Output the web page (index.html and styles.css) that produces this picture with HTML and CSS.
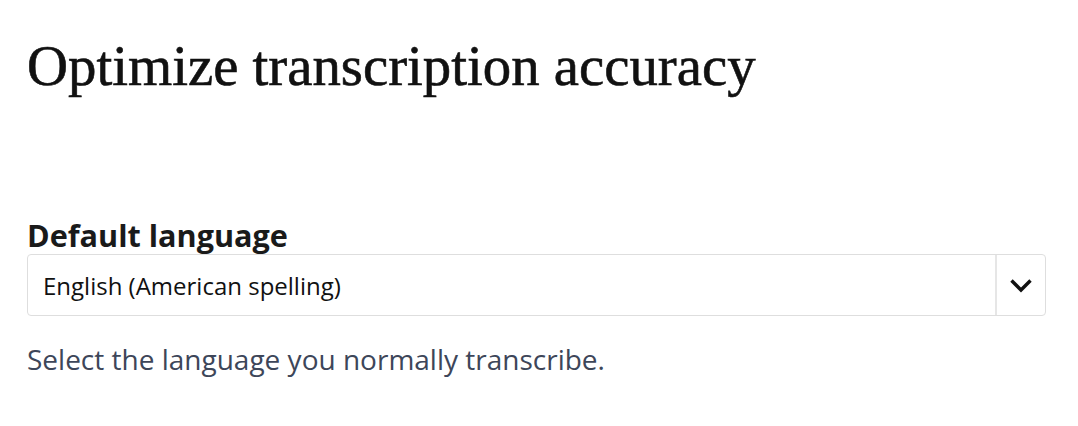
FILE: index.html
```html
<!DOCTYPE html>
<html lang="en">

<head>
    <meta charset="UTF-8">
    <title>Optimize transcription accuracy</title>
    <link rel="stylesheet" href="styles.css">
</head>

<body>
    <div class="page">
        <h1>Optimize transcription accuracy</h1>
        <div class="field">
            <label for="lang">Default language</label>
            <div class="select" id="lang">
                <span class="value">English (American spelling)</span>
                <span class="arrow">
                    <svg width="24" height="15" viewBox="0 0 24 15">
                        <path d="M2.5 2.5 L12 12 L21.5 2.5" fill="none" stroke="#111" stroke-width="3.4" />
                    </svg>
                </span>
            </div>
            <p class="help">Select the language you normally transcribe.</p>
        </div>
    </div>
</body>

</html>
```

FILE: styles.css
```css
body {
    margin: 0;
    background: #fff;
    font-family: "Open Sans", sans-serif;
}

.page {
    padding: 32px 27px;
    width: 1019px;
}

h1 {
    font-family: "Liberation Serif", serif;
    font-weight: 400;
    font-size: 56.8px;
    color: #111;
    margin: 0;
    line-height: 68px;
    -webkit-text-stroke: 0.6px #111;
}

.field {
    margin-top: 117px;
}

label {
    display: block;
    font-weight: 700;
    font-size: 30.6px;
    color: #1a1a1a;
    line-height: 36px;
}

.select {
    display: flex;
    height: 60px;
    border: 1px solid #dedede;
    border-radius: 4px;
    margin-top: 1px;
}

.value {
    flex: 1;
    display: flex;
    align-items: center;
    padding-left: 15px;
    font-size: 24px;
    color: #111;
}

.arrow {
    width: 48px;
    border-left: 2px solid #e6e6e6;
    display: flex;
    align-items: center;
    justify-content: center;
}

.help {
    margin: 24px 0 0;
    font-size: 28px;
    color: #3d4659;
}
```
